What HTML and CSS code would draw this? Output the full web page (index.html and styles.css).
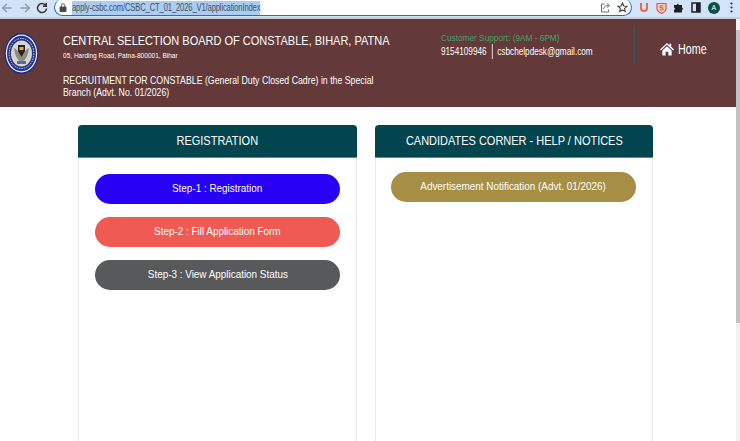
FILE: index.html
```html
<!DOCTYPE html>
<html lang="en">
<head>
<meta charset="utf-8">
<title>CSBC Constable Recruitment</title>
<link rel="stylesheet" href="styles.css">
</head>
<body>
<div class="chrome">
  <div class="nav">
    <svg width="14" height="14" viewBox="0 0 14 14"><path d="M11.500 7H2.800M6.800 3 2.800 7l4 4" fill="none" stroke="#8f9bab" stroke-width="1.300"/></svg>
    <svg width="14" height="14" viewBox="0 0 14 14"><path d="M2.500 7h8.700M7.200 3l4 4-4 4" fill="none" stroke="#8f9bab" stroke-width="1.300"/></svg>
    <svg width="14" height="14" viewBox="0 0 14 14"><path d="M10.800 4.600A4.500 4.500 0 1 0 11.500 7.500M11.200 2v3.200H8" fill="none" stroke="#30343a" stroke-width="1.500"/></svg>
  </div>
  <div class="omnibox">
    <svg class="lock" width="8" height="9" viewBox="0 0 8 9"><path d="M1 4h6v4.500H1zM2.300 4V2.500a1.700 1.700 0 0 1 3.400 0V4" fill="none" stroke="#444b53" stroke-width=".9"/><path d="M1 4h6v4.500H1z" fill="#444b53"/></svg>
    <div class="url"><span class="url-text">apply-csbc.com/CSBC_CT_01_2026_V1/applicationIndex</span></div>
    <svg class="omni-icon" width="11" height="11" viewBox="0 0 11 11"><path d="M4.500 2H1.500v8h7V7.500M3.500 7c.5-2.500 2.500-3.500 5-3.500M7 1.500l2.500 2-2.500 2" fill="none" stroke="#6b7076" stroke-width="1"/></svg>
    <svg class="omni-icon" width="11" height="11" viewBox="0 0 11 11"><path d="m5.500 1 1.300 3 3.200.300-2.400 2.100.700 3.100-2.800-1.600-2.800 1.600.700-3.100L1 4.300l3.200-.300z" fill="none" stroke="#3b4046" stroke-width="1.100"/></svg>
  </div>
  <div class="extensions">
    <div class="ext"><svg width="10" height="11" viewBox="0 0 10 11"><path d="M2 1v5a3 3 0 0 0 6 0V1" fill="none" stroke="#e86a4a" stroke-width="2"/></svg></div>
    <div class="ext"><svg width="11" height="12" viewBox="0 0 11 12"><path d="M1 1.500h9V7c0 2-2.500 3.500-4.500 4.500C3.500 10.500 1 9 1 7z" fill="#f7cfc4" stroke="#e5583f" stroke-width="1.200"/><path d="M7.300 3.800H4v2h3v2H3.800" fill="none" stroke="#e5583f" stroke-width="1"/></svg></div>
    <div class="ext"><svg width="11" height="11" viewBox="0 0 11 11"><path d="M1 3h2.500a1.300 1.300 0 0 1 2.500 0h3v2.500a1.300 1.300 0 0 1 0 2.500V10.500H1V8a1.300 1.300 0 0 0 0-2.500z" fill="#1f2328"/></svg></div>
    <div class="ext"><svg width="10" height="11" viewBox="0 0 10 11"><rect x="1" y="1" width="8" height="9" fill="none" stroke="#1f2328" stroke-width="1.500"/><rect x="5" y="1" width="4" height="9" fill="#1f2328"/></svg></div>
    <div class="ext"><span class="avatar">A</span></div>
    <div class="ext"><svg width="3" height="11" viewBox="0 0 3 11"><circle cx="1.500" cy="1.500" r="1.100" fill="#30343a"/><circle cx="1.500" cy="5.500" r="1.100" fill="#30343a"/><circle cx="1.500" cy="9.500" r="1.100" fill="#30343a"/></svg></div>
  </div>
</div>

<header class="site-header">
  <svg class="logo" width="35" height="41" viewBox="0 0 35 41">
    <ellipse cx="17.500" cy="20.500" rx="17" ry="20.500" fill="#1c2a86"/>
    <ellipse cx="17.500" cy="20.500" rx="15.700" ry="19" fill="#eef0f6"/>
    <ellipse cx="17.500" cy="20.500" rx="14.500" ry="17.700" fill="#26348e"/>
    <ellipse cx="17.500" cy="20.500" rx="12.300" ry="15" fill="none" stroke="#cfd3e6" stroke-width="1" stroke-dasharray="1.500 1"/>
    <ellipse cx="17.500" cy="20.500" rx="10.500" ry="13" fill="#d6d6d0"/>
    <path d="M10 15c1 8 3 12 7.500 14C22 27 24 23 25 15c-2 1-3 2-3.500 3h-8C13 17 12 16 10 15z" fill="#8d8c80"/>
    <path d="M14 12h7v6l-3.500 6-3.500-6z" fill="#26241c"/>
    <path d="M15.500 14h4v3h-4z" fill="#d9b43f"/>
    <path d="M13 28h9v3h-9z" fill="#5a6a9c"/>
  </svg>
  <div class="title-block">
    <h1 class="org-name">CENTRAL SELECTION BOARD OF CONSTABLE, BIHAR, PATNA</h1>
    <p class="address">05, Harding Road, Patna-800001, Bihar</p>
    <p class="advert">RECRUITMENT FOR CONSTABLE (General Duty Closed Cadre) in the Special Branch (Advt. No. 01/2026)</p>
  </div>
  <div class="support">
    <p class="support-label">Customer Support: (9AM - 6PM)</p>
    <p class="support-contact"><span class="phone">9154109946</span><span>csbchelpdesk@gmail.com</span></p>
  </div>
  <a class="home" href="#">
    <svg width="14" height="14" viewBox="0 0 15 15"><path d="M7.500 1 0 8l1 1 6.500-6 6.500 6 1-1-3-2.800V2h-2v1.400z" fill="#fff"/><path d="M2.500 9.200 7.500 4.500l5 4.700V14.500H9v-4H6v4H2.500z" fill="#fff"/></svg>
    <span class="home-label">Home</span>
  </a>
</header>

<main class="content">
  <section class="card card-left">
    <h2 class="card-title"><span class="card-title-text">REGISTRATION</span></h2>
    <div class="card-body">
      <a class="pill pill-blue" href="#"><span class="pill-text">Step-1 : Registration</span></a>
      <a class="pill pill-red" href="#"><span class="pill-text">Step-2 : Fill Application Form</span></a>
      <a class="pill pill-grey" href="#"><span class="pill-text">Step-3 : View Application Status</span></a>
    </div>
  </section>
  <section class="card card-right">
    <h2 class="card-title"><span class="card-title-text">CANDIDATES CORNER - HELP / NOTICES</span></h2>
    <div class="card-body">
      <a class="pill pill-gold" href="#"><span class="pill-text">Advertisement Notification (Advt. 01/2026)</span></a>
    </div>
  </section>
</main>
<div class="scrollbar"><div class="scroll-arrow"></div><div class="scroll-thumb"></div></div>
</body>
</html>
```

FILE: styles.css
```css
* { box-sizing: border-box; }
html { height: 441px; overflow: hidden; }
body {
  margin: 0;
  height: 441px;
  overflow: hidden;
  background: #fff;
  font-family: "Liberation Sans", Arial, sans-serif;
  color: #fff;
  position: relative;
}
p, h1, h2 { margin: 0; font-weight: 400; }
a { color: inherit; text-decoration: none; }

.chrome {
  height: 19px;
  display: flex;
  align-items: flex-start;
  background: #d3e3f8;
  border-bottom: 2px solid #c4cdd9;
}
.nav {
  width: 54px;
  height: 15px;
  display: flex;
  align-items: center;
  gap: 3.500px;
}
.nav svg { flex: none; }
.omnibox {
  width: 579px;
  height: 17px;
  margin-top: -1px;
  display: flex;
  align-items: center;
  gap: 5px;
  padding: 1px 3px 0 4.500px;
  background: #fff;
  border: 1.500px solid #1a73c9;
  border-top: 0;
  border-radius: 9px;
}
.lock { flex: none; }
.url {
  flex: 1;
  min-width: 0;
}
.url-text {
  display: block;
  width: fit-content;
  font-size: 10px;
  line-height: 14px;
  white-space: nowrap;
  color: #4a4f55;
  letter-spacing: -.2px;
  background: #a9cdf5;
  transform: scaleX(.765);
  transform-origin: left center;
}
.omni-icon { flex: none; margin-left: 1.500px; }
.extensions {
  height: 15px;
  display: flex;
  align-items: center;
  padding-left: 3px;
}
.ext {
  width: 17.500px;
  display: flex;
  justify-content: center;
  align-items: center;
}
.avatar {
  width: 12px;
  height: 12px;
  border-radius: 50%;
  background: #06504a;
  font-size: 7px;
  line-height: 12px;
  text-align: center;
}

.site-header {
  height: 88px;
  margin-right: 4px;
  display: flex;
  align-items: flex-start;
  background: #63393a;
  padding: 14px 0 0 4px;
}
.logo { flex: none; margin-right: 24px; }
.title-block { flex: none; width: 345px; margin-top: -1px; }
.org-name {
  font-size: 13.300px;
  line-height: 17px;
  white-space: nowrap;
  transform: scaleX(.827);
  transform-origin: left center;
}
.address {
  font-size: 7.500px;
  line-height: 10px;
  margin-top: 2px;
  white-space: nowrap;
  transform: scaleX(.87);
  transform-origin: left center;
}
.advert {
  width: 375px;
  font-size: 10.500px;
  line-height: 12px;
  margin-top: 13px;
  transform: scaleX(.835);
  transform-origin: left center;
}
.support {
  flex: none;
  width: 191.500px;
  margin-left: 33px;
  margin-top: -1px;
}
.support-label {
  font-size: 9.500px;
  line-height: 12px;
  color: #43a367;
  white-space: nowrap;
  transform: scaleX(.87);
  transform-origin: left center;
}
.support-contact {
  display: flex;
  width: 200px;
  font-size: 10px;
  line-height: 15px;
  white-space: nowrap;
  transform: scaleX(.82);
  transform-origin: left center;
}
.phone { border-right: 1px solid #fff; padding-right: 6px; margin-right: 6px; }
.home {
  flex: none;
  width: 103.500px;
  height: 35px;
  margin-top: -5px;
  padding: 14px 0 0 25.500px;
  display: flex;
  align-items: flex-start;
  gap: 4px;
  border-left: 2px solid #2f5658;
}
.home-label {
  display: inline-block;
  font-size: 14px;
  line-height: 14px;
  transform: scaleX(.77);
  transform-origin: left center;
}

.content {
  display: flex;
  gap: 18px;
  padding: 18px 0 0 78px;
}
.card {
  height: 316px;
  background: #fff;
  border: 1px solid #e9e9e9;
  border-top: 0;
  border-bottom: 0;
  border-radius: 4px 4px 0 0;
}
.card-left { width: 279px; }
.card-right { width: 278px; }
.card-title {
  height: 33px;
  margin: 0 -1px;
  background: #02454f;
  border-bottom: 1px solid #5c8a98;
  border-radius: 4px 4px 0 0;
  font-size: 13px;
  line-height: 32px;
  text-align: center;
  white-space: nowrap;
}
.card-title-text {
  display: inline-block;
  transform: scaleX(.845);
}
.card-body {
  display: flex;
  flex-direction: column;
  gap: 13px;
  padding: 16px 16px 0;
}
.card-right .card-body { padding: 14px 16px 0 15px; }
.pill {
  height: 30px;
  border-radius: 15px;
  font-size: 11px;
  line-height: 28px;
  text-align: center;
  white-space: nowrap;
}
.pill-text {
  display: inline-block;
  transform: scaleX(.9);
}
.pill-blue { background: #2800f5; }
.pill-red { background: #ef5a53; }
.pill-grey { background: #58595b; }
.pill-gold { background: #a68f44; }

.scrollbar {
  position: absolute;
  top: 19px;
  right: 0;
  bottom: 0;
  width: 4px;
  background: #f1f1f1;
}
.scroll-arrow { height: 11px; background: #f1f1f1; }
.scroll-thumb { height: 293px; background: #c2c2c2; }
```
